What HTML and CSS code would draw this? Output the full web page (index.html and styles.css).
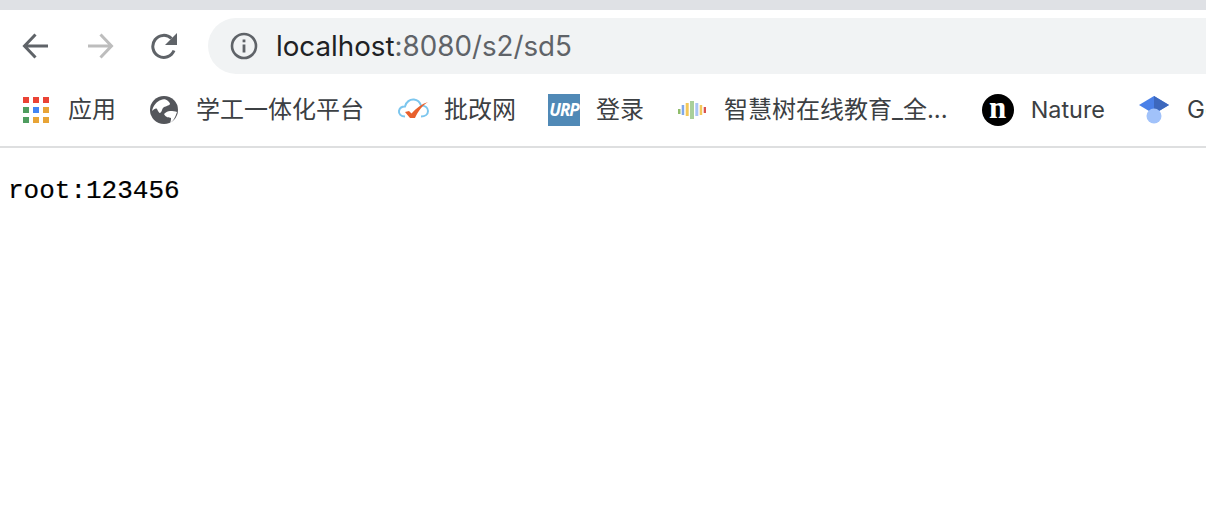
FILE: index.html
```html
<!DOCTYPE html>
<html lang="zh">
<head>
<meta charset="utf-8">
<title>localhost:8080/s2/sd5</title>
<link rel="stylesheet" href="styles.css">
</head>
<body>
<header class="chrome">
  <div class="tabstrip"></div>
  <div class="toolbar">
    <svg class="nav nav-back" viewBox="0 0 28 28"><path d="M26 14H3M13.500 2.500 2.500 14l11 11.500" fill="none" stroke="#5f6368" stroke-width="3"/></svg>
    <svg class="nav nav-forward" viewBox="0 0 28 28"><path d="M2 14h23M14.500 2.500 25.500 14l-11 11.500" fill="none" stroke="#bdbdbd" stroke-width="3"/></svg>
    <svg class="nav nav-reload" viewBox="0 0 28 28"><path d="M24 18.500A11 11 0 1 1 21.500 6.500" fill="none" stroke="#5f6368" stroke-width="3"/><path d="M27 1v12H15z" fill="#5f6368"/></svg>
    <div class="omnibox">
      <svg class="info" viewBox="0 0 28 28"><circle cx="14" cy="14" r="12" fill="none" stroke="#5f6368" stroke-width="2.600"/><rect x="12.600" y="12.500" width="2.800" height="8" fill="#5f6368"/><rect x="12.600" y="7.500" width="2.800" height="2.800" fill="#5f6368"/></svg>
      <div class="url"><span class="host">localhost</span>:8080/s2/sd5</div>
    </div>
  </div>
  <nav class="bookmarks">
    <a class="bm bm-apps">
      <svg class="ico" viewBox="0 0 26 26">
        <rect width="6" height="6" fill="#ea4335"/><rect x="10" width="6" height="6" fill="#ea4335"/><rect x="20" width="6" height="6" fill="#ea4335"/>
        <rect y="10" width="6" height="6" fill="#4f9d5f"/><rect x="10" y="10" width="6" height="6" fill="#4285f4"/><rect x="20" y="10" width="6" height="6" fill="#e8a436"/>
        <rect y="20" width="6" height="6" fill="#4f9d5f"/><rect x="10" y="20" width="6" height="6" fill="#e8a436"/><rect x="20" y="20" width="6" height="6" fill="#e8a436"/>
      </svg>
      <span>应用</span>
    </a>
    <a class="bm bm-globe">
      <svg class="ico-lg" viewBox="0 0 28 28"><circle cx="14" cy="14" r="14" fill="#54565b"/><path d="M18 5C16 3 13 3 11 4 7 5 3 10 2 15c2-2 4-3 5-2 1 2 2 4 3 4 2-1 2-4 3-5 2-2 6-2 7-4 0-1-1-2-2-3zM14 18c2-2 4-3 6-3 3 0 5 0 7 1-1 3-2 5-3 7-1 2-3 3-4 4 1-2 1-4 1-5-2-1-5 0-7-4z" fill="#fff"/></svg>
      <span>学工一体化平台</span>
    </a>
    <a class="bm bm-pigai">
      <svg class="ico-cloud" viewBox="0 0 32 24"><path d="M8 18.500C4 18.500 1.500 16 2 13s3-4.500 6-4.500C9 4 13 1 17 1.500s6 3 7 6c4 0 7 2 7 5.500s-3 5.500-7 5.500" fill="none" stroke="#7cc6ee" stroke-width="2"/><path d="M8 14l4-1 2.500 2.500C19 10 25 6 31 4c-5 3-10 9-13 16h-5z" fill="#e8602c"/></svg>
      <span>批改网</span>
    </a>
    <a class="bm bm-urp">
      <span class="urp">URP</span>
      <span>登录</span>
    </a>
    <a class="bm bm-zhs">
      <svg class="ico-bars" viewBox="0 0 28 18">
        <rect y="8" width="2.500" height="5" fill="#8fbc6a"/><rect x="3.700" y="4" width="2.500" height="10" fill="#7fa8ea"/><rect x="7.700" y="2" width="3" height="13" fill="#f3c85a"/><rect x="12" width="4" height="18" fill="#a9cf9a"/><rect x="17.300" y="2" width="3" height="13" fill="#a9c4f5"/><rect x="21.700" y="4" width="2.500" height="10" fill="#f3c85a"/><rect x="25.700" y="6" width="2.300" height="6" fill="#d9534f"/>
      </svg>
      <span>智慧树在线教育_全...</span>
    </a>
    <a class="bm bm-nature">
      <span class="ico-n">n</span>
      <span class="nature-label">Nature</span>
    </a>
    <a class="bm bm-gc">
      <svg class="ico-gc" viewBox="0 0 30 28"><path d="M15 0 30 9 15 18 0 9z" fill="#4a80e8"/><path d="M15 0 30 9 15 18z" fill="#3d68bd"/><circle cx="15" cy="20" r="7.500" fill="#a1c2fa"/></svg>
      <span>Google</span>
    </a>
  </nav>
</header>
<main class="page">root:123456</main>
</body>
</html>
```
FILE: styles.css
```css
html, body { margin: 0; padding: 0; background: #fff; overflow: hidden; height: 100%; }
.chrome { border-bottom: 2px solid #dedfe0; }
.tabstrip { height: 9.500px; background: #dfe1e5; }
.toolbar { height: 64.500px; display: flex; align-items: flex-start; overflow: hidden; box-sizing: border-box; padding: 8.500px 0 0 22px; }
.nav { width: 28px; height: 28px; flex: none; margin-top: 14px; }
.nav-forward { margin-left: 36px; }
.nav-reload { margin-left: 36px; }
.omnibox { flex: none; width: 1040px; height: 56px; margin-left: 30px; background: #f1f3f4; border-radius: 28px; display: flex; align-items: center; padding-left: 22px; }
.info { width: 28px; height: 28px; flex: none; }
.url { margin-left: 18px; padding-top: 2px; font: 27.750px/1 Inter, Roboto, sans-serif; color: #5f6368; white-space: nowrap; }
.host { color: #202124; }
.bookmarks { height: 72px; display: flex; align-items: center; padding-left: 23px; overflow: hidden; white-space: nowrap; color: #3c4043; }
.bm { display: flex; align-items: center; flex: none; }
.bm span:last-child { font: 24px/1 Inter, "Noto Sans CJK SC", sans-serif; }
.bm span.nature-label { font-size: 23.400px; }
.ico { width: 26px; height: 26px; margin-right: 19px; }
.ico-lg { width: 28px; height: 28px; margin-left: 34px; margin-right: 18px; }
.ico-cloud { width: 32px; height: 24px; margin-left: 33px; margin-right: 15px; }
.urp { width: 32px; height: 32px; background: #5089b6; color: #fff; margin-left: 32px; margin-right: 16px; font: italic bold 17px/32px "Open Sans", sans-serif; text-align: center; letter-spacing: -1px; overflow: hidden; }
.ico-bars { width: 28px; height: 18px; margin-left: 34px; margin-right: 18px; }
.ico-n { width: 32px; height: 32px; margin-left: 34px; margin-right: 17px; border-radius: 50%; background: #000; color: #fff; font: bold 31px/27px "Liberation Serif", serif; text-align: center; }
.ico-gc { width: 30px; height: 28px; margin-left: 34px; margin-right: 18px; }
.page { margin: 0; padding: 28px 0 0 8px; font: 26px/30px "Liberation Mono", monospace; color: #000; -webkit-text-stroke: 0.2px #000; }
```
